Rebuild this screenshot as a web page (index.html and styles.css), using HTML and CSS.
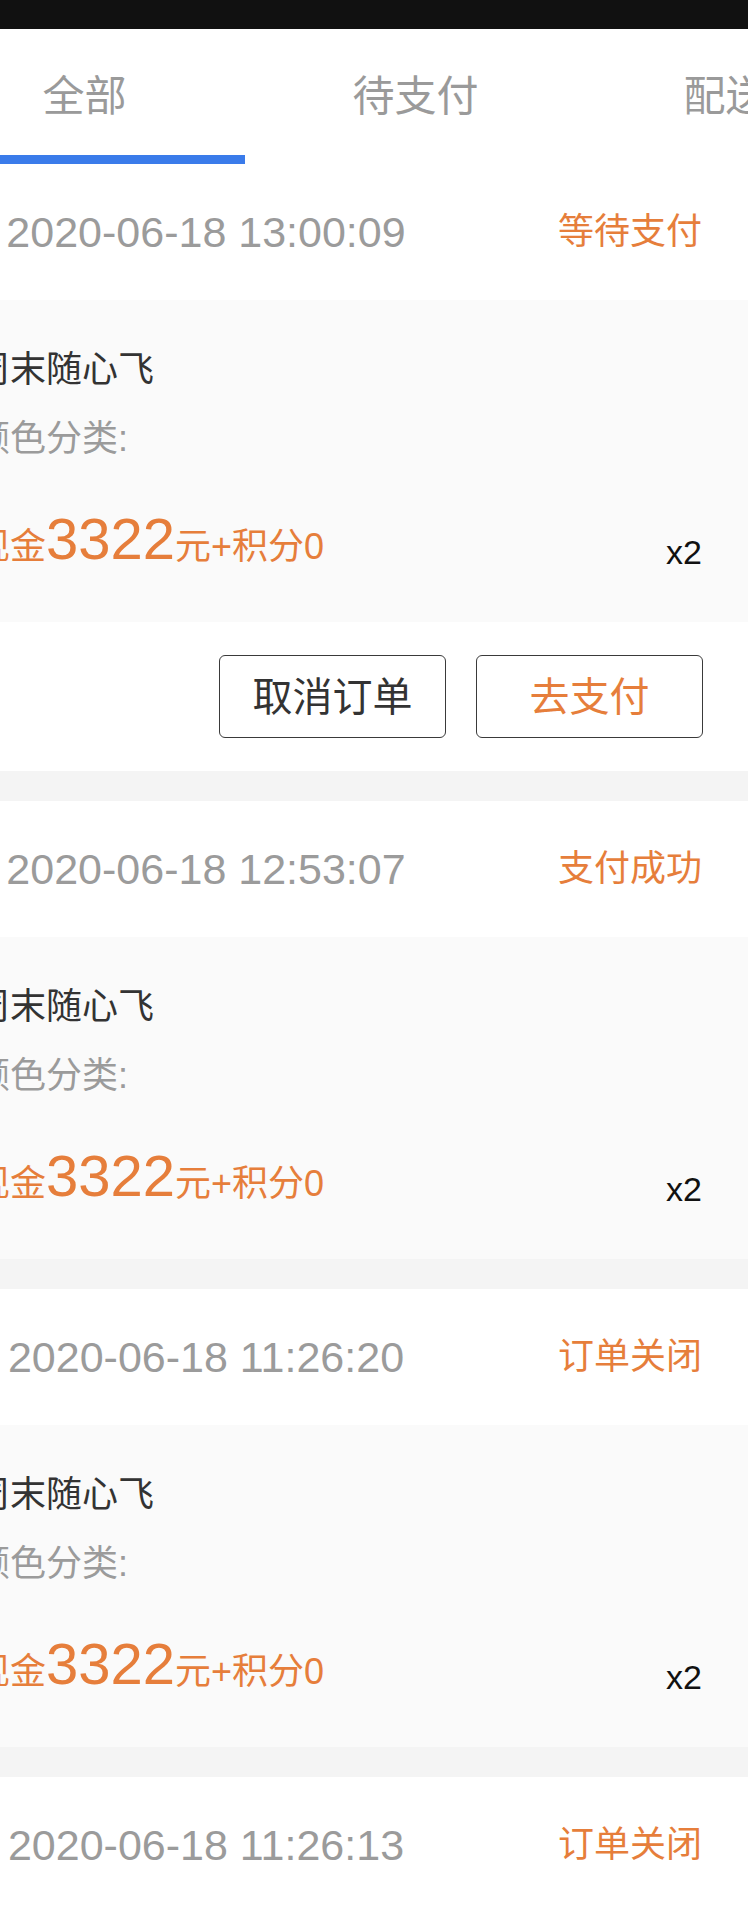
FILE: index.html
```html
<!DOCTYPE html>
<html lang="zh-CN">
<head>
<meta charset="utf-8">
<title>订单列表</title>
<link rel="stylesheet" href="styles.css">
</head>
<body>
<div class="statusbar"></div>
<div class="tabs">
  <div class="tab active">全部</div>
  <div class="tab">待支付</div>
  <div class="tab">配送中</div>
</div>

<div class="order">
  <div class="order-head"><span class="date">2020-06-18 13:00:09</span><span class="status">等待支付</span></div>
  <div class="goods">
    <div class="goods-info">
      <div class="name">周末随心飞</div>
      <div class="spec">颜色分类:</div>
      <div class="price-row"><div class="price"><span class="sm">现金</span>3322<span class="sm">元+积分0</span></div><div class="qty">x2</div></div>
    </div>
  </div>
  <div class="actions"><button class="btn">取消订单</button><button class="btn pay">去支付</button></div>
</div>
<div class="gap"></div>

<div class="order">
  <div class="order-head"><span class="date">2020-06-18 12:53:07</span><span class="status">支付成功</span></div>
  <div class="goods">
    <div class="goods-info">
      <div class="name">周末随心飞</div>
      <div class="spec">颜色分类:</div>
      <div class="price-row"><div class="price"><span class="sm">现金</span>3322<span class="sm">元+积分0</span></div><div class="qty">x2</div></div>
    </div>
  </div>
</div>
<div class="gap"></div>

<div class="order">
  <div class="order-head"><span class="date">2020-06-18 11:26:20</span><span class="status">订单关闭</span></div>
  <div class="goods">
    <div class="goods-info">
      <div class="name">周末随心飞</div>
      <div class="spec">颜色分类:</div>
      <div class="price-row"><div class="price"><span class="sm">现金</span>3322<span class="sm">元+积分0</span></div><div class="qty">x2</div></div>
    </div>
  </div>
</div>
<div class="gap"></div>

<div class="order">
  <div class="order-head"><span class="date">2020-06-18 11:26:13</span><span class="status">订单关闭</span></div>
</div>
</body>
</html>
```

FILE: styles.css
```css
html, body {
  margin: 0;
  padding: 0;
  overflow: hidden;
  background: #ffffff;
}
body {
  width: 748px;
  font-family: "Liberation Sans", "Noto Sans CJK SC", sans-serif;
  color: #333333;
}
.statusbar {
  height: 29px;
  background: #111111;
}
.tabs {
  display: flex;
  margin-left: -81px;
  height: 135px;
  background: #ffffff;
}
.tab {
  flex: 0 0 331px;
  position: relative;
  text-align: center;
  font-size: 42px;
  line-height: 135px;
  color: #9a9a9a;
  white-space: nowrap;
}
.tab.active::after {
  content: "";
  position: absolute;
  left: 0;
  bottom: 0;
  width: 326px;
  height: 9px;
  background: #3a7bea;
}
.order {
  background: #ffffff;
}
.order-head {
  display: flex;
  align-items: center;
  height: 136px;
}
.date {
  width: 412px;
  text-align: center;
  font-size: 43px;
  line-height: 43px;
  color: #9b9b9b;
  white-space: nowrap;
}
.status {
  margin-left: auto;
  padding-right: 46px;
  font-size: 36px;
  line-height: 36px;
  color: #e67e3b;
}
.goods {
  background: #fafafa;
  height: 322px;
  box-sizing: border-box;
  padding: 48px 46px 0 0;
}
.goods-info {
  margin-left: -26px;
}
.name {
  font-size: 36px;
  line-height: 44px;
  color: #333333;
  white-space: nowrap;
}
.spec {
  margin-top: 25px;
  font-size: 36px;
  line-height: 44px;
  color: #9b9b9b;
}
.price-row {
  margin-top: 49px;
  display: flex;
  align-items: flex-end;
  justify-content: space-between;
}
.price {
  font-size: 58px;
  line-height: 58px;
  color: #e67e3b;
  white-space: nowrap;
}
.price .sm {
  font-size: 36px;
  line-height: 36px;
}
.qty {
  font-size: 34px;
  line-height: 32px;
  color: #111111;
}
.actions {
  display: flex;
  justify-content: flex-end;
  align-items: center;
  gap: 30px;
  height: 149px;
  padding-right: 45px;
}
.btn {
  width: 227px;
  height: 83px;
  box-sizing: border-box;
  border: 1.5px solid #3a3a3a;
  border-radius: 6px;
  background: #ffffff;
  font-family: "Liberation Sans", "Noto Sans CJK SC", sans-serif;
  font-size: 40px;
  line-height: 1;
  color: #333333;
  padding: 0;
}
.btn.pay {
  color: #e67e3b;
}
.gap {
  height: 30px;
  background: #f4f4f4;
}
```
